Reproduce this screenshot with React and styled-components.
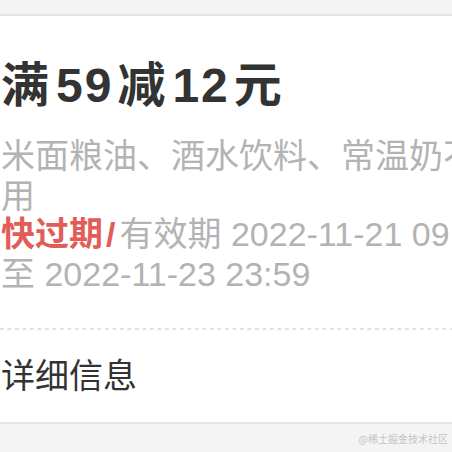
import React from 'react'
import styled, { createGlobalStyle } from 'styled-components'

const GlobalStyle = createGlobalStyle`
    html, body {
        margin: 0;
        padding: 0;
        background: #f4f4f4;
        overflow: hidden;
    }
    body {
        font-family: "Liberation Sans", "Noto Sans CJK SC", sans-serif;
    }
`;

const Page = styled.div`
    width: 452px;
    height: 452px;
    overflow: hidden;
    display: flex;
    flex-direction: column;
`;

const TopBand = styled.div`
    height: 14px;
    flex: none;
    background: #f4f4f4;
    border-bottom: 2px solid #dfe9e2;
`;

const Card = styled.div`
    width: 520px;
    flex: none;
    background: #fff;
    padding: 39px 0 0 1px;
    border-bottom: 2px solid #dfe9e2;
`;

const Title = styled.div`
    font-size: 48px;
    font-weight: 700;
    color: #333;
    line-height: 62px;

    .num {
        margin: 0 4px 0 7px;
        letter-spacing: 2px;
    }
`;

const Desc = styled.div`
    margin-top: 19px;
    font-size: 34px;
    line-height: 40px;
    color: #b3b3b3;
`;

const Validity = styled.div`
    margin-top: -2px;
    font-size: 34px;
    line-height: 40px;
    color: #b3b3b3;
`;

const Tag = styled.span`
    color: #e25c58;
    font-weight: 700;

    i {
        font-style: normal;
        margin: 0 4px 0 3px;
    }
`;

const Divider = styled.div`
    margin: 34px 0 0 -1px;
    height: 2px;
    background-image: linear-gradient(to right, #e2e2e2 4px, transparent 4px);
    background-size: 7.5px 2px;
`;

const DetailRow = styled.div`
    padding: 22px 0 22px;
    font-size: 34px;
    line-height: 48px;
    color: #333;
`;

const Footer = styled.div`
    flex: 1;
    display: flex;
    justify-content: flex-end;
    align-items: center;
    padding-right: 4px;
`;

const Watermark = styled.span`
    font-family: "Noto Sans CJK SC", serif;
    font-size: 10px;
    color: #c4c4c4;
`;

export default function App() {
    return (
        <Page>
            <GlobalStyle />
            <TopBand />
            <Card>
                <Title>满<span className="num">59</span>减<span className="num">12</span>元</Title>
                <Desc>米面粮油、酒水饮料、常温奶不可用</Desc>
                <Validity>
                    <Tag>快过期<i>/</i></Tag>有效期 2022-11-21 09:00<br />至 2022-11-23 23:59
                </Validity>
                <Divider />
                <DetailRow>详细信息</DetailRow>
            </Card>
            <Footer>
                <Watermark>@稀土掘金技术社区</Watermark>
            </Footer>
        </Page>
    )
}
